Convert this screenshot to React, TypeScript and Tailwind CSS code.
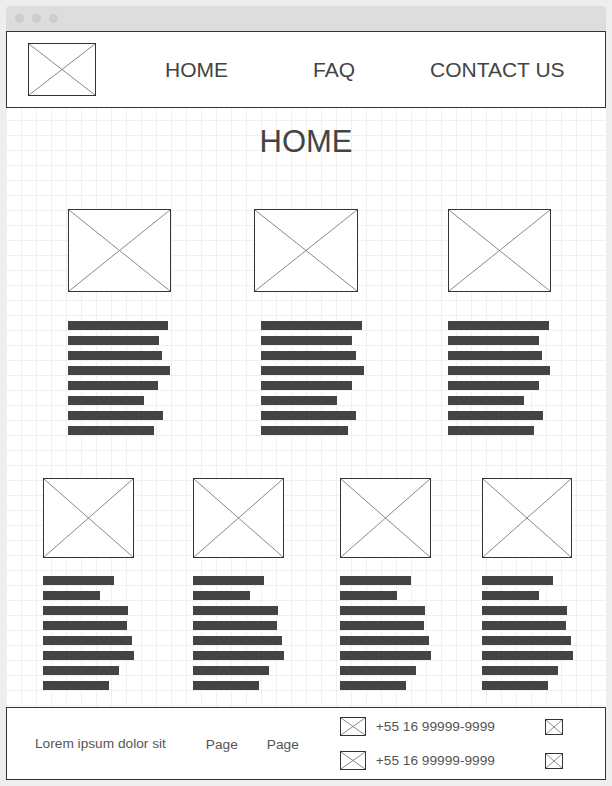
const row1Bars = [
  [100, 91, 94, 102, 90, 76, 95, 86],
  [101, 91, 95, 103, 91, 76, 95, 87],
  [101, 91, 94, 102, 91, 76, 95, 86],
];

const row2Bars = [71, 57, 85, 84, 89, 91, 76, 66];

function Placeholder({ className }: { className: string }) {
  return (
    <div className={`border border-[#333] bg-white ${className}`}>
      <svg className="block h-full w-full" viewBox="0 0 100 100" preserveAspectRatio="none">
        <line x1="0" y1="0" x2="100" y2="100" stroke="#888" strokeWidth="1" vectorEffect="non-scaling-stroke" />
        <line x1="100" y1="0" x2="0" y2="100" stroke="#888" strokeWidth="1" vectorEffect="non-scaling-stroke" />
      </svg>
    </div>
  );
}

function Bars({ widths, className = "" }: { widths: number[]; className?: string }) {
  return (
    <div className={`flex flex-col gap-[6px] ${className}`}>
      {widths.map((w, i) => (
        <div key={i} className="h-[9px] bg-[#444]" style={{ width: w }} />
      ))}
    </div>
  );
}

function PhoneRow() {
  return (
    <div className="flex items-center">
      <Placeholder className="h-[19px] w-[26px]" />
      <div className="ml-[10px] w-[169px] text-[13.7px] leading-none text-[#555]">+55 16 99999-9999</div>
      <Placeholder className="h-[16px] w-[18px]" />
    </div>
  );
}

export default function App() {
  return (
    <div
      className="h-[786px] w-[612px] overflow-hidden bg-[#eeeeee] pl-[6px] pt-[6px]"
      style={{ fontFamily: '"Liberation Sans", Arial, sans-serif' }}
    >
      <div className="w-[600px]">
        {/* title bar */}
        <div className="flex h-[25px] items-center gap-[8px] rounded-t-[4px] bg-[#dddddd] pl-[9px]">
          <span className="h-[9px] w-[9px] rounded-full bg-[#cdcdcd]" />
          <span className="h-[9px] w-[9px] rounded-full bg-[#cdcdcd]" />
          <span className="h-[9px] w-[9px] rounded-full bg-[#cdcdcd]" />
        </div>

        {/* header */}
        <header className="flex h-[77px] items-center border border-[#333] bg-white text-[21px] leading-none text-[#444]">
          <Placeholder className="ml-[21px] h-[53px] w-[68px]" />
          <span className="ml-[69px]">HOME</span>
          <span className="ml-[85px]">FAQ</span>
          <span className="ml-[75px]">CONTACT US</span>
        </header>

        {/* body */}
        <main className="h-[599px] bg-white [background-image:linear-gradient(to_right,#f0f0f0_1px,transparent_1px),linear-gradient(to_bottom,#f0f0f0_1px,transparent_1px)] [background-position:0_12px] [background-size:15px_15px]">
          <h1 className="pt-[18px] text-center text-[31px] leading-[31px] text-[#444]">HOME</h1>

          <div className="mt-[52px] flex">
            <div className="ml-[62px] w-[103px]">
              <Placeholder className="h-[83px] w-[103px]" />
              <Bars widths={row1Bars[0]} className="mt-[29px]" />
            </div>
            <div className="ml-[83px] w-[103px]">
              <Placeholder className="h-[83px] w-[104px]" />
              <Bars widths={row1Bars[1]} className="ml-[7px] mt-[29px]" />
            </div>
            <div className="ml-[91px] w-[103px]">
              <Placeholder className="h-[83px] w-[103px]" />
              <Bars widths={row1Bars[2]} className="mt-[29px]" />
            </div>
          </div>

          <div className="mt-[43px] flex">
            <div className="ml-[37px] w-[91px]">
              <Placeholder className="h-[80px] w-[91px]" />
              <Bars widths={row2Bars} className="mt-[18px]" />
            </div>
            <div className="ml-[59px] w-[91px]">
              <Placeholder className="h-[80px] w-[91px]" />
              <Bars widths={row2Bars} className="mt-[18px]" />
            </div>
            <div className="ml-[56px] w-[91px]">
              <Placeholder className="h-[80px] w-[91px]" />
              <Bars widths={row2Bars} className="mt-[18px]" />
            </div>
            <div className="ml-[51px] w-[91px]">
              <Placeholder className="h-[80px] w-[90px]" />
              <Bars widths={row2Bars} className="mt-[18px]" />
            </div>
          </div>
        </main>

        {/* footer */}
        <footer className="flex h-[73px] items-center border border-[#333] bg-white text-[13.7px] leading-none text-[#555]">
          <span className="ml-[28px]">Lorem ipsum dolor sit</span>
          <span className="ml-[40px] mt-[2px]">Page</span>
          <span className="ml-[29px] mt-[2px]">Page</span>
          <div className="ml-[41px] flex flex-col gap-[15px]">
            <PhoneRow />
            <PhoneRow />
          </div>
        </footer>
      </div>
    </div>
  );
}
